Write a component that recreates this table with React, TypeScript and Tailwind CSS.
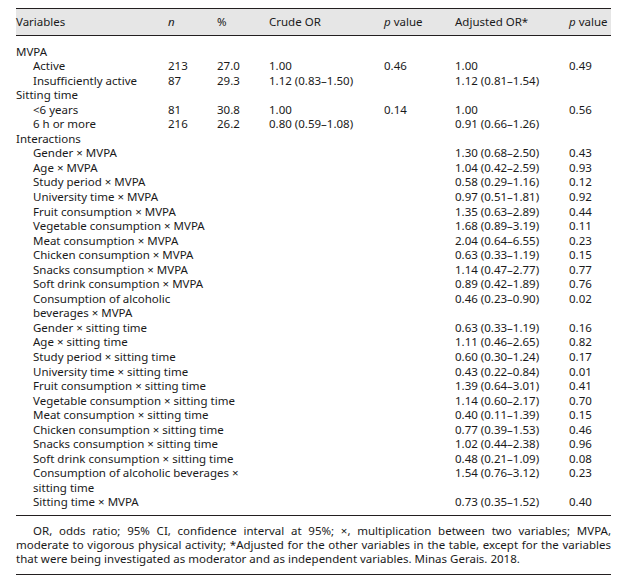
import React from "react";

type Row = {
  v: string | React.ReactNode;
  indent?: boolean;
  n?: string;
  pct?: string;
  crude?: string;
  p1?: string;
  adj?: string;
  p2?: string;
};

const X = "\u00d7";

const rows: Row[] = [
  { v: "MVPA" },
  { v: "Active", indent: true, n: "213", pct: "27.0", crude: "1.00", p1: "0.46", adj: "1.00", p2: "0.49" },
  { v: "Insufficiently active", indent: true, n: "87", pct: "29.3", crude: "1.12 (0.83\u20131.50)", adj: "1.12 (0.81\u20131.54)" },
  { v: "Sitting time" },
  { v: "<6 years", indent: true, n: "81", pct: "30.8", crude: "1.00", p1: "0.14", adj: "1.00", p2: "0.56" },
  { v: "6 h or more", indent: true, n: "216", pct: "26.2", crude: "0.80 (0.59\u20131.08)", adj: "0.91 (0.66\u20131.26)" },
  { v: "Interactions" },
  { v: `Gender ${X} MVPA`, indent: true, adj: "1.30 (0.68\u20132.50)", p2: "0.43" },
  { v: `Age ${X} MVPA`, indent: true, adj: "1.04 (0.42\u20132.59)", p2: "0.93" },
  { v: `Study period ${X} MVPA`, indent: true, adj: "0.58 (0.29\u20131.16)", p2: "0.12" },
  { v: `University time ${X} MVPA`, indent: true, adj: "0.97 (0.51\u20131.81)", p2: "0.92" },
  { v: `Fruit consumption ${X} MVPA`, indent: true, adj: "1.35 (0.63\u20132.89)", p2: "0.44" },
  { v: `Vegetable consumption ${X} MVPA`, indent: true, adj: "1.68 (0.89\u20133.19)", p2: "0.11" },
  { v: `Meat consumption ${X} MVPA`, indent: true, adj: "2.04 (0.64\u20136.55)", p2: "0.23" },
  { v: `Chicken consumption ${X} MVPA`, indent: true, adj: "0.63 (0.33\u20131.19)", p2: "0.15" },
  { v: `Snacks consumption ${X} MVPA`, indent: true, adj: "1.14 (0.47\u20132.77)", p2: "0.77" },
  { v: `Soft drink consumption ${X} MVPA`, indent: true, adj: "0.89 (0.42\u20131.89)", p2: "0.76" },
  {
    v: (
      <>
        Consumption of alcoholic
        <br />
        beverages {X} MVPA
      </>
    ),
    indent: true,
    adj: "0.46 (0.23\u20130.90)",
    p2: "0.02",
  },
  { v: `Gender ${X} sitting time`, indent: true, adj: "0.63 (0.33\u20131.19)", p2: "0.16" },
  { v: `Age ${X} sitting time`, indent: true, adj: "1.11 (0.46\u20132.65)", p2: "0.82" },
  { v: `Study period ${X} sitting time`, indent: true, adj: "0.60 (0.30\u20131.24)", p2: "0.17" },
  { v: `University time ${X} sitting time`, indent: true, adj: "0.43 (0.22\u20130.84)", p2: "0.01" },
  { v: `Fruit consumption ${X} sitting time`, indent: true, adj: "1.39 (0.64\u20133.01)", p2: "0.41" },
  { v: `Vegetable consumption ${X} sitting time`, indent: true, adj: "1.14 (0.60\u20132.17)", p2: "0.70" },
  { v: `Meat consumption ${X} sitting time`, indent: true, adj: "0.40 (0.11\u20131.39)", p2: "0.15" },
  { v: `Chicken consumption ${X} sitting time`, indent: true, adj: "0.77 (0.39\u20131.53)", p2: "0.46" },
  { v: `Snacks consumption ${X} sitting time`, indent: true, adj: "1.02 (0.44\u20132.38)", p2: "0.96" },
  { v: `Soft drink consumption ${X} sitting time`, indent: true, adj: "0.48 (0.21\u20131.09)", p2: "0.08" },
  {
    v: (
      <>
        Consumption of alcoholic beverages {X}
        <br />
        sitting time
      </>
    ),
    indent: true,
    adj: "1.54 (0.76\u20133.12)",
    p2: "0.23",
  },
  { v: `Sitting time ${X} MVPA`, indent: true, adj: "0.73 (0.35\u20131.52)", p2: "0.40" },
];

export default function App() {
  return (
    <div
      className="w-[622px] h-[580px] bg-white text-[#1a1a1a] text-[11.5px] pt-[8px]"
      style={{ fontFamily: '"Noto Sans", "Open Sans", sans-serif' }}
    >
      <div className="ml-[16px] w-[595px]">
        <table className="w-full table-fixed border-collapse">
          <colgroup>
            <col className="w-[152px]" />
            <col className="w-[49px]" />
            <col className="w-[52px]" />
            <col className="w-[115px]" />
            <col className="w-[71px]" />
            <col className="w-[114px]" />
            <col className="w-[42px]" />
          </colgroup>
          <thead>
            <tr className="bg-[#e6e6e6] border-t-[1.5px] border-b-[1.5px] border-[#231f20]">
              <th className="text-left font-normal h-[27px] p-0 align-middle">Variables</th>
              <th className="text-left font-normal p-0 italic">n</th>
              <th className="text-left font-normal p-0">%</th>
              <th className="text-left font-normal p-0">Crude OR</th>
              <th className="text-left font-normal p-0">
                <span className="italic">p</span> value
              </th>
              <th className="text-left font-normal p-0">Adjusted OR*</th>
              <th className="text-left font-normal p-0 whitespace-nowrap">
                <span className="italic">p</span> value
              </th>
            </tr>
          </thead>
          <tbody className="leading-[14.55px]">
            <tr>
              <td className="h-[9px] p-0" colSpan={7}></td>
            </tr>
            {rows.map((r, i) => (
              <tr key={i} className="align-top">
                <td className={`p-0 whitespace-nowrap ${r.indent ? "pl-[17px]" : ""}`}>{r.v}</td>
                <td className="p-0">{r.n}</td>
                <td className="p-0">{r.pct}</td>
                <td className="p-0 whitespace-nowrap">{r.crude}</td>
                <td className="p-0">{r.p1}</td>
                <td className="p-0 whitespace-nowrap">{r.adj}</td>
                <td className="p-0">{r.p2}</td>
              </tr>
            ))}
            <tr>
              <td className="h-[5px] p-0" colSpan={7}></td>
            </tr>
          </tbody>
        </table>
        <div className="border-t-[1.5px] border-b-[1.5px] border-[#231f20] pt-[8px] pb-[8px] leading-[14px] text-justify">
          <p className="indent-[17px]">
            OR, odds ratio; 95% CI, confidence interval at 95%; {X}, multiplication between two variables; MVPA,
            moderate to vigorous physical activity; *Adjusted for the other variables in the table, except for the
            variables that were being investigated as moderator and as independent variables. Minas Gerais. 2018.
          </p>
        </div>
      </div>
    </div>
  );
}
